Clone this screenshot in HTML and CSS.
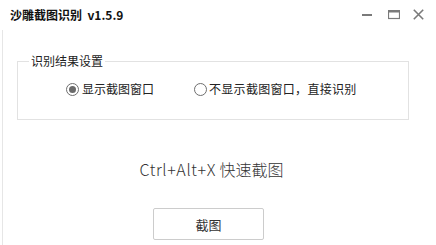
FILE: index.html
```html
<!DOCTYPE html>
<html lang="zh-CN">
<head>
<meta charset="utf-8">
<title>沙雕截图识别</title>
<link rel="stylesheet" href="styles.css">
</head>
<body>
<div class="window">
  <header class="titlebar">
    <span class="title">沙雕截图识别&nbsp;&nbsp;v1.5.9</span>
    <div class="controls">
      <svg class="ic-min" width="10" height="10" viewBox="0 0 10 10"><rect x="0" y="4" width="10" height="2" fill="#7a7a7a"/></svg>
      <svg class="ic-max" width="12" height="10" viewBox="0 0 12 10"><rect x="0.5" y="0.5" width="11" height="8" fill="none" stroke="#7a7a7a" stroke-width="1.2"/><rect x="0" y="0" width="12" height="2.5" fill="#7a7a7a"/></svg>
      <svg class="ic-close" width="11" height="11" viewBox="0 0 11 11"><path d="M0.8 0.8 L10.2 10.2 M10.2 0.8 L0.8 10.2" stroke="#7a7a7a" stroke-width="1.6" fill="none"/></svg>
    </div>
  </header>
  <main class="client">
    <fieldset class="group">
      <legend class="group-title">识别结果设置</legend>
      <div class="radios">
        <label class="radio radio-first"><span class="dot checked"></span><span class="radio-text">显示截图窗口</span></label>
        <label class="radio radio-second"><span class="dot"></span><span class="radio-text">不显示截图窗口，直接识别</span></label>
      </div>
    </fieldset>
    <p class="hotkey"><span class="hotkey-keys">Ctrl+Alt+X</span> 快速截图</p>
    <div class="actions"><button class="btn" type="button">截图</button></div>
  </main>
</div>
</body>
</html>
```

FILE: styles.css
```css
* { box-sizing: border-box; }
html, body {
  margin: 0;
  padding: 0;
  background: #ffffff;
}
body {
  width: 436px;
  height: 245px;
  overflow: hidden;
  font-family: "Noto Sans CJK SC", "Noto Sans", sans-serif;
  color: #222;
}
.window {
  display: flex;
  flex-direction: column;
  height: 245px;
}
.titlebar {
  height: 30px;
  display: flex;
  align-items: center;
  padding-left: 10px;
  padding-right: 12px;
}
.title {
  font-size: 12px;
  font-weight: bold;
  color: #111;
  line-height: 14px;
}
.controls {
  margin-left: auto;
  display: flex;
  align-items: center;
}
.ic-min { margin-right: 16px; }
.ic-max { margin-right: 13px; margin-top: -1px; }
.ic-close { margin-top: -1px; }

.client {
  flex: 1;
  margin-left: 2px;
  margin-right: 22px;
  border-left: 1px solid #e6e6e6;
  display: flex;
  flex-direction: column;
}
.group {
  margin: 23px 0 0 14px;
  padding: 0 0 22px 0;
  width: 392px;
  border: 1px solid #e2e2e2;
  min-width: 0;
}
.group-title {
  margin-left: 11px;
  padding: 0 2px;
  font-size: 12px;
  line-height: 16px;
  color: #222;
}
.radios {
  display: flex;
  align-items: center;
  padding-top: 12px;
  padding-left: 48px;
  height: 28px;
}
.radio {
  display: flex;
  align-items: center;
  font-size: 12px;
  line-height: 16px;
  color: #222;
}
.radio-first { width: 128px; }
.dot {
  width: 13px;
  height: 13px;
  border: 1px solid #6e6e6e;
  border-radius: 50%;
  margin-right: 3px;
  display: flex;
  align-items: center;
  justify-content: center;
  background: #fff;
}
.dot.checked::after {
  content: "";
  width: 7px;
  height: 7px;
  border-radius: 50%;
  background: #6a6a6a;
}
.radio-second .dot { margin-right: 2px; }
.radio-second .radio-text { letter-spacing: 0.3px; }
.hotkey {
  margin: 39px 0 0 0;
  padding-left: 6px;
  text-align: center;
  font-size: 16px;
  line-height: 20px;
  font-weight: 300;
  color: #333;
}
.hotkey-keys { letter-spacing: 0.6px; }
.actions {
  display: flex;
  justify-content: center;
  margin-top: 29px;
}
.btn {
  width: 111px;
  height: 32px;
  border: 1px solid #cccccc;
  border-radius: 2px;
  background: #fff;
  font-family: "Noto Sans CJK SC", sans-serif;
  font-size: 13px;
  color: #333;
  padding: 0;
}
```
